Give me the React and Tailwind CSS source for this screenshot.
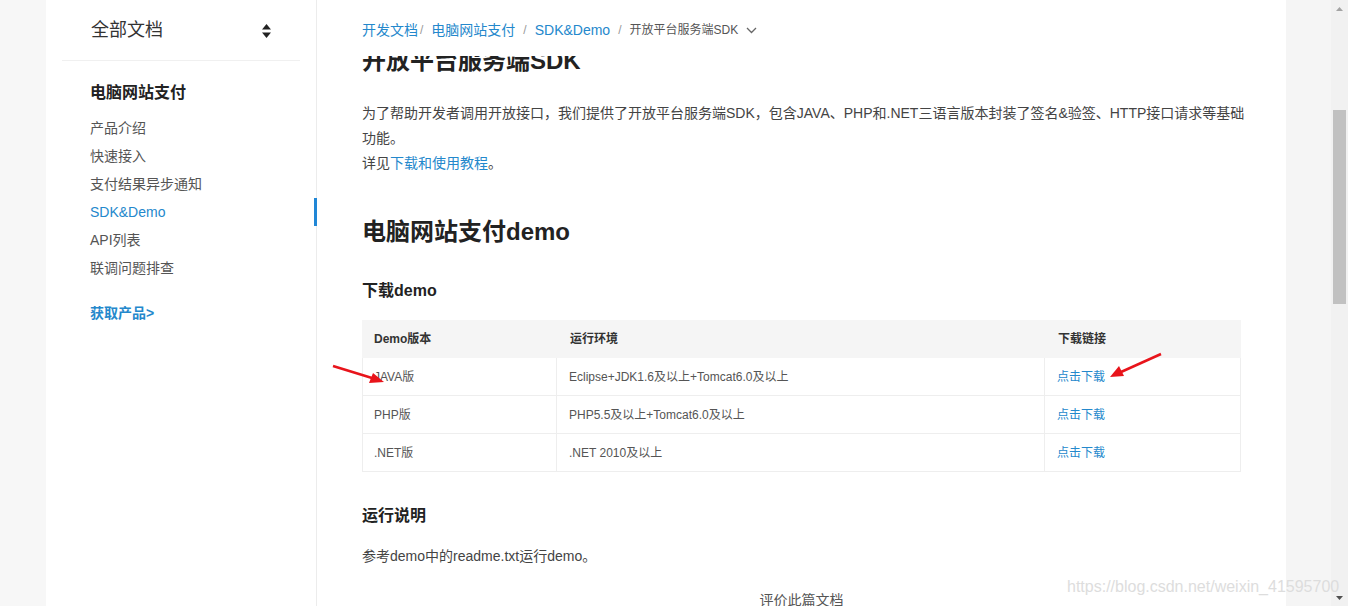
import React from 'react';

const font = { fontFamily: '"Liberation Sans", Arial, "Noto Sans CJK SC", sans-serif' };

const navItems = ['产品介绍', '快速接入', '支付结果异步通知', 'SDK&Demo', 'API列表', '联调问题排查'];

const rows = [
  { name: 'JAVA版', env: 'Eclipse+JDK1.6及以上+Tomcat6.0及以上' },
  { name: 'PHP版', env: 'PHP5.5及以上+Tomcat6.0及以上' },
  { name: '.NET版', env: '.NET 2010及以上' },
];

const Sidebar = () => (
  <aside className="w-[271px] shrink-0 bg-white border-r border-[#ececec] px-[16px]">
    <div className="flex items-center justify-between px-[29px] h-[60px]">
      <span className="text-[18px] leading-[24px] text-[#333]">全部文档</span>
      <svg width="9" height="14" viewBox="0 0 9 14" className="mt-[1px]">
        <path d="M4.5 0 L9 5.5 H0 Z" fill="#222" />
        <path d="M4.5 14 L9 8.5 H0 Z" fill="#222" />
      </svg>
    </div>
    <div className="border-t border-[#f0f0f0]" />
    <div className="px-[28px]">
      <div className="mt-[20px] text-[16px] leading-[24px] font-bold text-[#222]">电脑网站支付</div>
      <ul className="mt-[9px]">
        {navItems.map((item) => (
          <li
            key={item}
            className={`relative text-[14px] leading-[28px] ${item === 'SDK&Demo' ? 'text-[#2488cc]' : 'text-[#555]'}`}
          >
            {item}
            {item === 'SDK&Demo' && (
              <span className="absolute right-[-45px] top-0 h-[28px] w-[3px] bg-[#2187d6]" />
            )}
          </li>
        ))}
      </ul>
      <div className="mt-[21px] text-[14px] leading-[20px] font-bold text-[#2488cc]">获取产品&gt;</div>
    </div>
  </aside>
);

const Breadcrumb = () => (
  <div className="relative z-10 h-[56px] bg-white pt-[20px]">
    <div className="flex items-center text-[14px] leading-[20px]">
      <span className="text-[#2488cc]">开发文档</span>
      <span className="text-[#999] text-[12px] ml-[2px]">/</span>
      <span className="text-[#2488cc] ml-[8px]">电脑网站支付</span>
      <span className="text-[#999] text-[12px] mx-[8px]">/</span>
      <span className="text-[#2488cc]">SDK&amp;Demo</span>
      <span className="text-[#999] text-[12px] mx-[8px]">/</span>
      <span className="text-[#555] text-[12px]">开放平台服务端SDK</span>
      <svg width="11" height="7" viewBox="0 0 11 7" className="ml-[8px]">
        <path d="M1 1 L5.5 5.5 L10 1" fill="none" stroke="#666" strokeWidth="1.3" />
      </svg>
    </div>
  </div>
);

const DemoTable = () => (
  <div className="mt-[17px] text-[12px]">
    <div className="grid grid-cols-[195px_488px_1fr] h-[38px] items-center bg-[#f5f5f5] font-bold text-[#333]">
      <div className="pl-[12px]">Demo版本</div>
      <div className="pl-[13px]">运行环境</div>
      <div className="pl-[13px]">下载链接</div>
    </div>
    <div className="border-x border-[#eeeeee]">
      {rows.map((r) => (
        <div key={r.name} className="grid grid-cols-[194px_488px_1fr] h-[38px] border-b border-[#eeeeee] text-[#555]">
          <div className="pl-[11px] pt-[1px] flex items-center border-r border-[#eeeeee]">{r.name}</div>
          <div className="pl-[12px] pt-[1px] flex items-center border-r border-[#eeeeee]">{r.env}</div>
          <div className="pl-[12px] pt-[1px] flex items-center text-[#2488cc]">点击下载</div>
        </div>
      ))}
    </div>
  </div>
);

const Arrows = () => (
  <svg className="absolute inset-0 pointer-events-none" width="1348" height="606">
    <line x1="333" y1="366" x2="372" y2="378" stroke="#e8141b" strokeWidth="2.5" />
    <path d="M384 382 L369 383 L373 373 Z" fill="#e8141b" />
    <line x1="1161" y1="354" x2="1121" y2="372" stroke="#e8141b" strokeWidth="2.5" />
    <path d="M1110 377 L1119 366 L1124 376 Z" fill="#e8141b" />
  </svg>
);

const Scrollbar = () => (
  <div className="w-[17px] shrink-0 bg-[#f1f1f1] flex flex-col items-center">
    <div className="h-[17px] flex items-center justify-center">
      <svg width="7" height="4" viewBox="0 0 7 4"><path d="M3.5 0 L7 4 H0 Z" fill="#a3a3a3" /></svg>
    </div>
    <div className="mt-[93px] w-[13px] h-[194px] bg-[#c1c1c1]" />
    <div className="flex-1" />
    <div className="h-[17px] flex items-center justify-center">
      <svg width="7" height="4" viewBox="0 0 7 4"><path d="M3.5 4 L7 0 H0 Z" fill="#505050" /></svg>
    </div>
  </div>
);

export default function App() {
  return (
    <div className="relative flex h-[606px] w-[1348px] overflow-hidden bg-[#f7f7f7]" style={font}>
      <div className="w-[46px] shrink-0" />
      <Sidebar />
      <main className="w-[969px] shrink-0 bg-white px-[45px] overflow-hidden">
        <Breadcrumb />
        <h1 className="-mt-[11px] text-[24px] leading-[32px] font-bold text-[#222]">开放平台服务端SDK</h1>
        <p className="mt-[24px] mr-[-12px] text-[14px] leading-[25px] text-[#444]">
          为了帮助开发者调用开放接口，我们提供了开放平台服务端SDK，包含JAVA、PHP和.NET三语言版本封装了签名&amp;验签、HTTP接口请求等基础功能。
          <br />
          详见<span className="text-[#2488cc]">下载和使用教程</span>。
        </p>
        <h2 className="mt-[40px] text-[24px] leading-[32px] font-bold text-[#222]">电脑网站支付demo</h2>
        <h3 className="mt-[31px] text-[16px] leading-[24px] font-bold text-[#222]">下载demo</h3>
        <DemoTable />
        <h3 className="mt-[32px] text-[16px] leading-[24px] font-bold text-[#222]">运行说明</h3>
        <p className="mt-[16px] text-[14px] leading-[25px] text-[#444]">参考demo中的readme.txt运行demo。</p>
        <div className="mt-[21px] text-center text-[14px] leading-[20px] text-[#555]">评价此篇文档</div>
      </main>
      <div className="w-[45px] shrink-0 bg-[#f5f5f5]" />
      <Scrollbar />
      <Arrows />
      <div className="absolute left-[1067px] top-[576px] text-[16px] leading-[22px] text-[#dddddd] pointer-events-none">
        https://blog.csdn.net/weixin_41595700
      </div>
    </div>
  );
}
